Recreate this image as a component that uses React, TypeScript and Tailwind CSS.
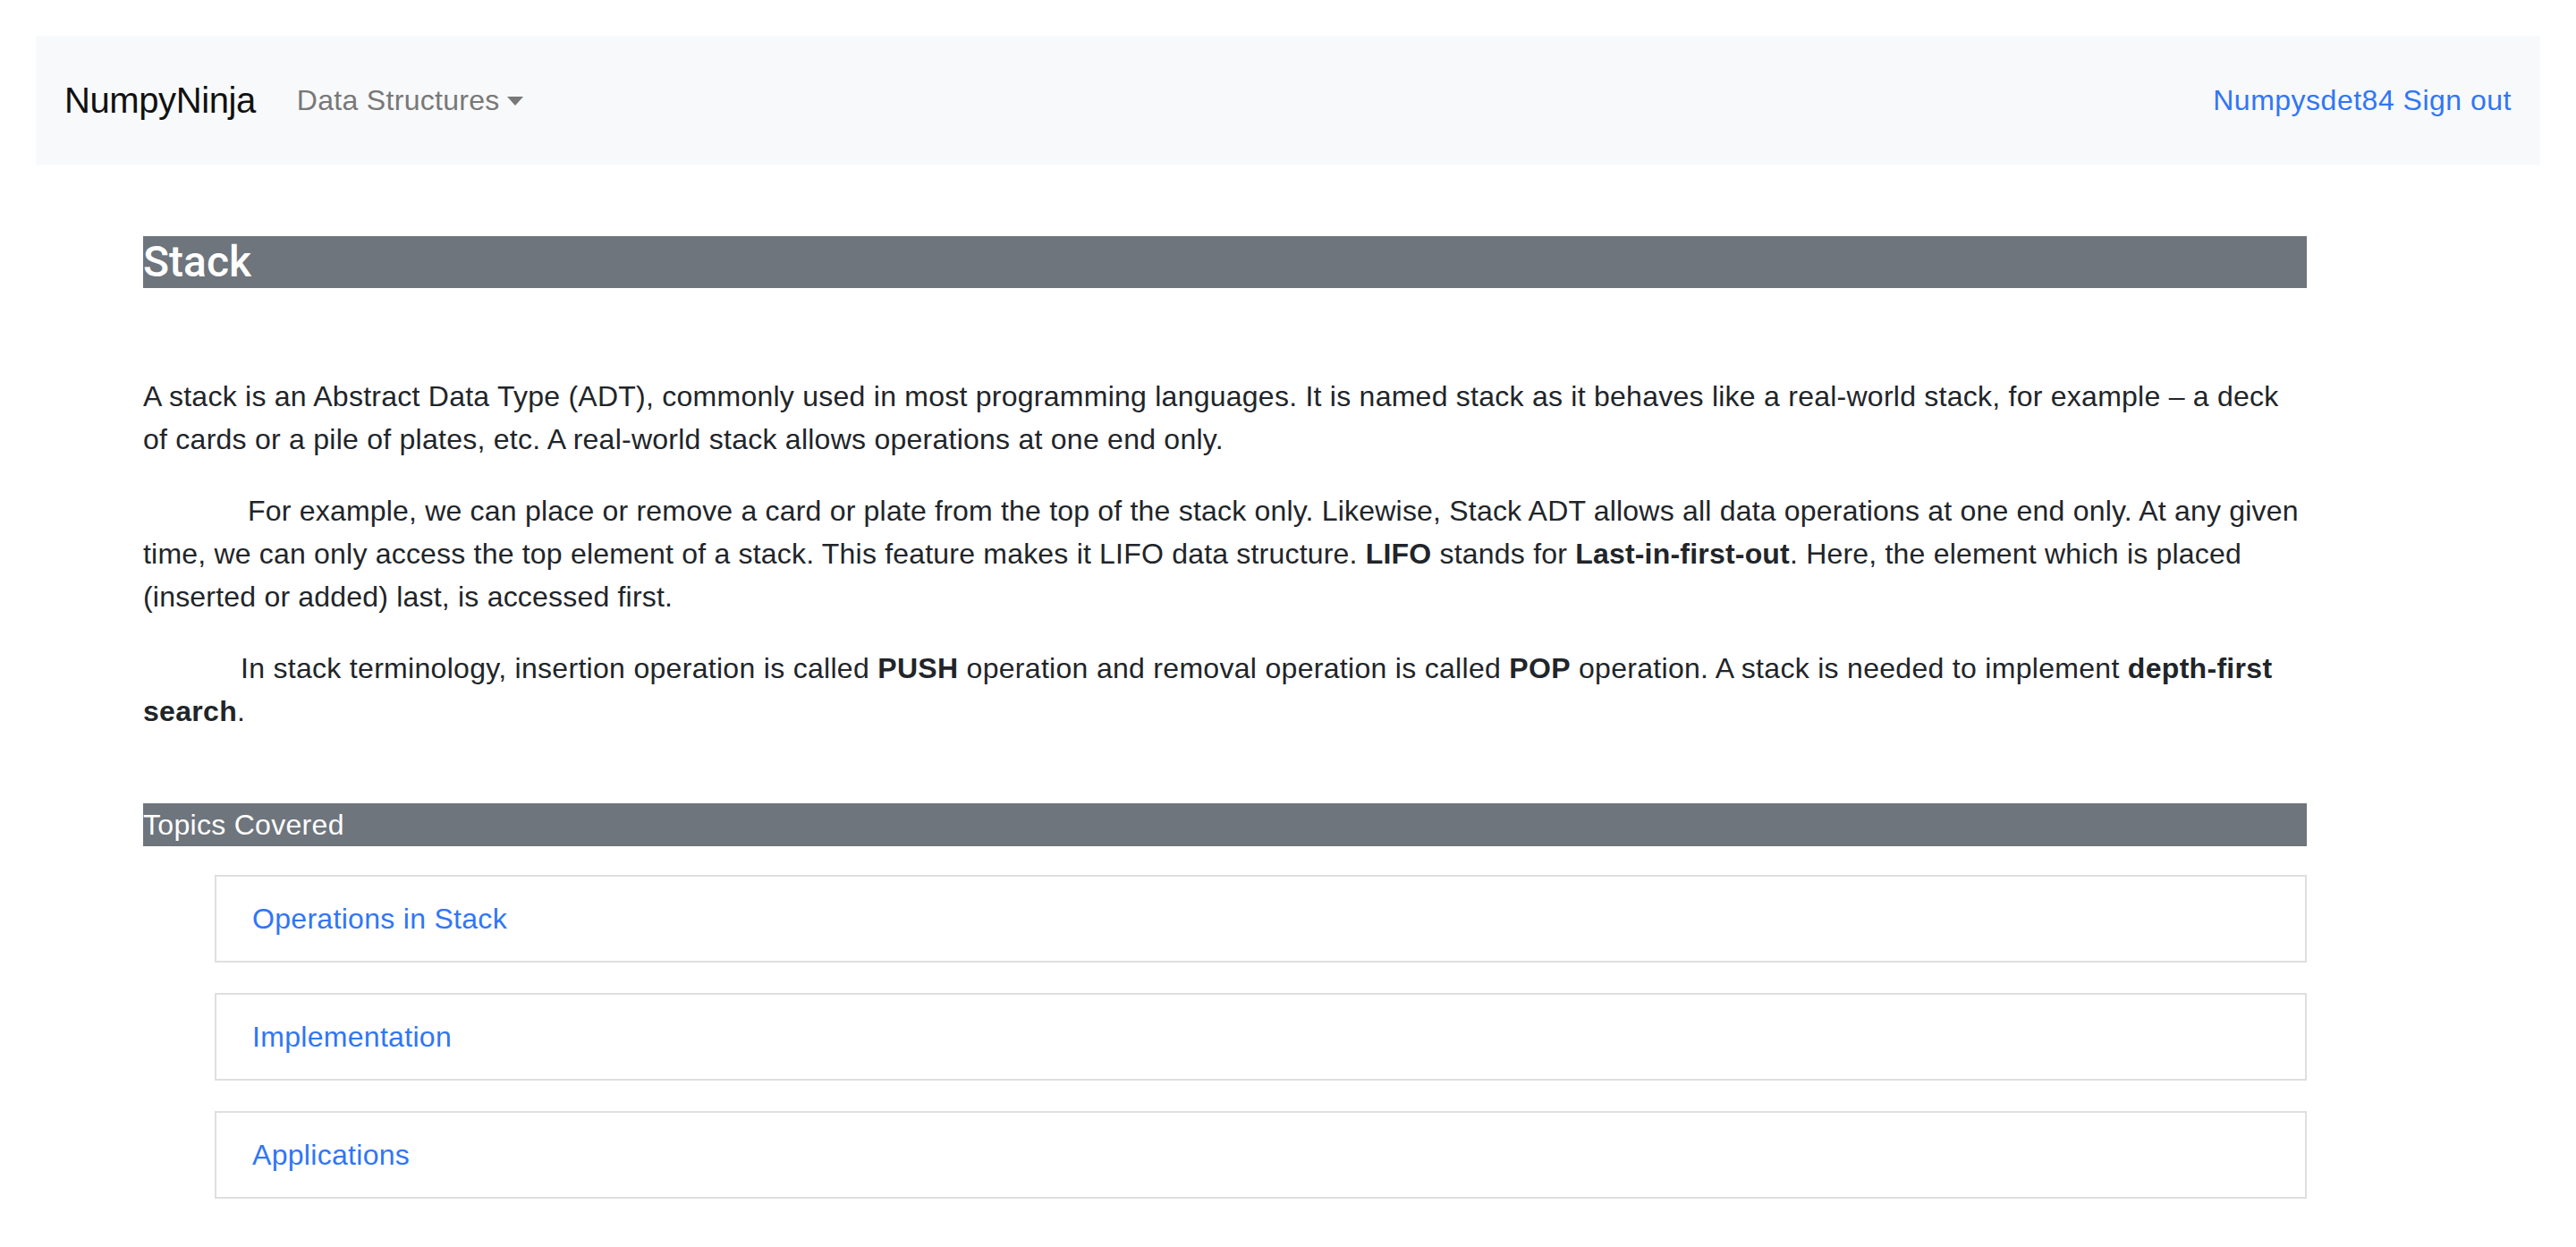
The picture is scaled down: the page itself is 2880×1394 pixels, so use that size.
import React from 'react';

const topics = ['Operations in Stack', 'Implementation', 'Applications'];

const Navbar: React.FC = () => (
  <nav className="flex h-[144px] items-center justify-between bg-[#f8f9fa] px-[32px]">
    <div className="flex items-center">
      <a className="mr-[46px] text-[40px] leading-[60px] tracking-[-0.4px] text-[#111111]">NumpyNinja</a>
      <a className="flex items-center text-[32px] leading-[48px] tracking-[0.3px] text-[#787878]">
        Data Structures
        <span className="ml-[8px] mt-[2px] inline-block h-0 w-0 border-x-[9px] border-t-[10px] border-x-transparent border-t-[#787878]" />
      </a>
    </div>
    <a className="text-[32px] leading-[48px] tracking-[0.5px] text-[#3076f6]">Numpysdet84 Sign out</a>
  </nav>
);

const App: React.FC = () => {
  return (
    <div
      className="min-h-[1394px] bg-white px-[40px] pt-[40px] text-[32px] leading-[48px] text-[#212529]"
      style={{ fontFamily: '"Liberation Sans", Arial, sans-serif' }}
    >
      <Navbar />

      <main className="ml-[120px] w-[2419px] pt-[80px]">
        <h4
          className="bg-[#6e757d] text-[48px] font-medium leading-[58px] text-white"
          style={{ fontFamily: 'Roboto, "Liberation Sans", sans-serif' }}
        >
          Stack
        </h4>

        <div className="pt-[97px]">
          <p className="mb-[32px] tracking-[0.25px]">
            A stack is an Abstract Data Type (ADT), commonly used in most programming languages. It is named stack as
            it behaves like a real-world stack, for example – a deck of cards or a pile of plates, etc. A real-world
            stack allows operations at one end only.
          </p>
          <p className="mb-[32px] indent-[117px] tracking-[0.2px]">
            For example, we can place or remove a card or plate from the top of the stack only. Likewise, Stack ADT
            allows all data operations at one end only. At any given time, we can only access the top element of a
            stack. This feature makes it LIFO data structure. <b className="font-bold">LIFO</b> stands for{' '}
            <b className="font-bold">Last-in-first-out</b>. Here, the element which is placed (inserted or added) last,
            is accessed first.
          </p>
          <p className="indent-[109px] tracking-[0.3px]">
            In stack terminology, insertion operation is called <b className="font-bold">PUSH</b> operation and
            removal operation is called <b className="font-bold">POP</b> operation. A stack is needed to implement{' '}
            <b className="font-bold">depth-first search</b>.
          </p>
        </div>

        <div className="mt-[79px] bg-[#6e757d] tracking-[0.3px] text-white">Topics Covered</div>

        <ul className="ml-[80px] mt-[32px] flex flex-col gap-[34px] tracking-[0.3px]">
          {topics.map((t) => (
            <li key={t} className="border-2 border-[#dfdfdf] px-[40px] py-[23px]">
              <a className="text-[#3076f6]">{t}</a>
            </li>
          ))}
        </ul>
      </main>
    </div>
  );
};

export default App;
